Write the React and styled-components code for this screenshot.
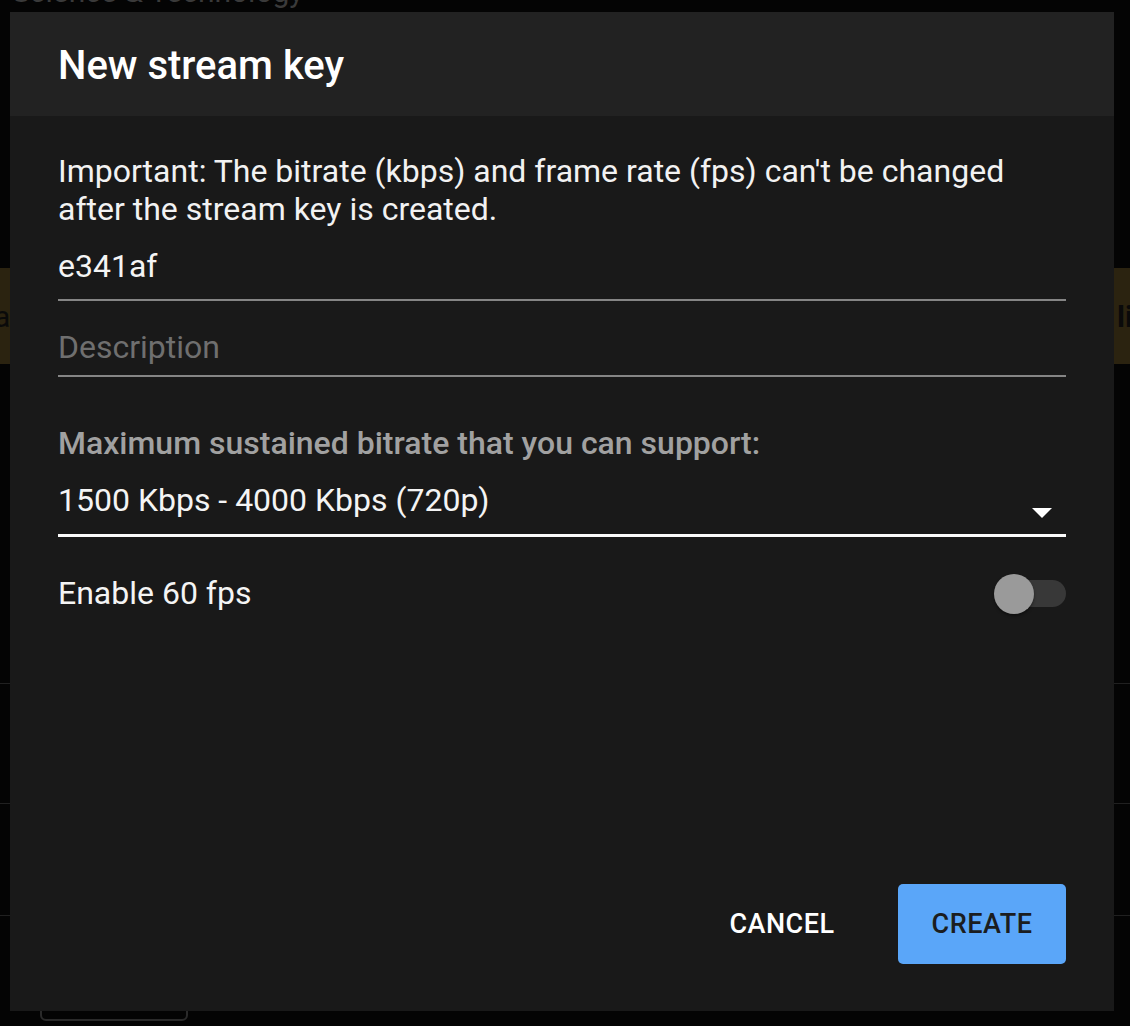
import React, { useState } from 'react'
import styled, { createGlobalStyle } from 'styled-components'

const GlobalStyle = createGlobalStyle`
  html, body {
    margin: 0;
    padding: 0;
    background: #040404;
    font-family: Roboto, "Noto Sans", "Liberation Sans", sans-serif;
    -webkit-font-smoothing: antialiased;
  }
  * { box-sizing: border-box; }
`

/* page behind the modal */
const Page = styled.div`
  position: relative;
  width: 1130px;
  height: 1026px;
  overflow: hidden;
  display: flex;
  flex-direction: column;
`

const PageTitle = styled.h2`
  margin: -25px 0 0 12px;
  font-size: 30px;
  line-height: 34px;
  font-weight: 400;
  color: #3a3a3a;
`

const Banner = styled.div`
  margin-top: 259px;
  height: 96px;
  background: #2b2310;
  display: flex;
  align-items: center;
  justify-content: space-between;
  font-size: 30px;
  color: #0a0a0a;
  overflow: hidden;
`

const BannerEdge = styled.span`
  margin: ${(p) => (p.right ? '0 -3px 0 0' : '0 0 0 -6px')};
  font-weight: ${(p) => (p.right ? 700 : 400)};
`

const ListGap = styled.div`
  height: 319px;
`

const ListRow = styled.div`
  height: ${(p) => p.h}px;
  border-top: 1px solid #202020;
`

const GhostButton = styled.div`
  margin: -8px 0 0 40px;
  width: 148px;
  height: 18px;
  border: 2px solid #2a2a2a;
  border-radius: 6px;
`

/* modal */
const Dialog = styled.div`
  position: fixed;
  left: 10px;
  top: 12px;
  width: 1104px;
  height: 999px;
  background: #191919;
  display: flex;
  flex-direction: column;
  color: #fff;
`

const Header = styled.div`
  height: 104px;
  flex: none;
  background: #222222;
  display: flex;
  align-items: center;
  padding: 2px 48px 0;
`

const Title = styled.h1`
  margin: 0;
  font-size: 40px;
  font-weight: 500;
`

const Body = styled.div`
  flex: 1;
  display: flex;
  flex-direction: column;
  padding: 36px 48px 47px;
`

const Notice = styled.p`
  margin: 0;
  font-size: 32px;
  line-height: 38px;
  color: #f2f2f2;
`

const Field = styled.input`
  display: block;
  width: 100%;
  margin: ${(p) => p.$top}px 0 0;
  padding: 0 0 ${(p) => p.$bottom}px;
  border: none;
  border-bottom: 2px solid #858585;
  background: transparent;
  outline: none;
  font: inherit;
  font-size: 32px;
  line-height: 38px;
  height: ${(p) => 38 + p.$bottom + 2}px;
  color: #f4f4f4;
  &::placeholder { color: #6f6f6f; }
`

const Label = styled.div`
  margin-top: 47px;
  font-size: 32px;
  line-height: 38px;
  font-weight: 500;
  color: #a1a1a1;
`

const Select = styled.div`
  margin-top: 19px;
  display: flex;
  align-items: center;
  justify-content: space-between;
  border-bottom: 3px solid #fafafa;
  padding-bottom: 15px;
  height: 56px;
`

const SelectValue = styled.span`
  font-size: 32px;
  line-height: 38px;
  color: #f4f4f4;
`

const Caret = styled.svg`
  width: 48px;
  height: 48px;
  margin: 12px 0 -12px;
  fill: #fff;
`

const ToggleRow = styled.div`
  margin-top: 37px;
  display: flex;
  align-items: center;
  justify-content: space-between;
  height: 38px;
`

const ToggleLabel = styled.span`
  font-size: 32px;
  line-height: 38px;
  color: #f4f4f4;
`

const Track = styled.button`
  position: relative;
  width: 56px;
  height: 27px;
  padding: 0;
  border: none;
  border-radius: 14px;
  background: ${(p) => (p.$on ? '#3b6fa8' : '#383838')};
  cursor: pointer;
`

const Thumb = styled.span`
  position: absolute;
  top: -6px;
  left: ${(p) => (p.$on ? '30px' : '-16px')};
  width: 40px;
  height: 40px;
  border-radius: 50%;
  background: ${(p) => (p.$on ? '#5aa6f9' : '#9a9a9a')};
  box-shadow: 0 2px 3px rgba(0, 0, 0, 0.4);
`

const Actions = styled.div`
  margin-top: auto;
  display: flex;
  justify-content: flex-end;
  gap: 32px;
`

const Button = styled.button`
  width: 168px;
  height: 80px;
  border: none;
  border-radius: 5px;
  background: ${(p) => (p.$primary ? '#5aa6f9' : 'transparent')};
  color: ${(p) => (p.$primary ? '#1b1d20' : '#fff')};
  font-family: inherit;
  font-size: 27px;
  font-weight: 500;
  letter-spacing: 0.5px;
  text-transform: uppercase;
  cursor: pointer;
`

const App = () => {
  const [key, setKey] = useState('e341af')
  const [desc, setDesc] = useState('')
  const [fps60, setFps60] = useState(false)

  return (
    <>
      <GlobalStyle />
      <Page>
        <PageTitle>Science &amp; Technology</PageTitle>
        <Banner>
          <BannerEdge>a</BannerEdge>
          <BannerEdge right>li</BannerEdge>
        </Banner>
        <ListGap />
        <ListRow h={120} />
        <ListRow h={112} />
        <ListRow h={96} />
        <GhostButton />
      </Page>

      <Dialog role="dialog">
        <Header>
          <Title>New stream key</Title>
        </Header>
        <Body>
          <Notice>
            Important: The bitrate (kbps) and frame rate (fps) can't be changed
            after the stream key is created.
          </Notice>
          <Field $top={19} $bottom={14} value={key} onChange={(e) => setKey(e.target.value)} />
          <Field
            $top={27}
            $bottom={9}
            placeholder="Description"
            value={desc}
            onChange={(e) => setDesc(e.target.value)}
          />
          <Label>Maximum sustained bitrate that you can support:</Label>
          <Select>
            <SelectValue>1500 Kbps - 4000 Kbps (720p)</SelectValue>
            <Caret viewBox="0 0 24 24">
              <path d="M7 10l5 5 5-5z" />
            </Caret>
          </Select>
          <ToggleRow>
            <ToggleLabel>Enable 60 fps</ToggleLabel>
            <Track $on={fps60} onClick={() => setFps60(!fps60)}>
              <Thumb $on={fps60} />
            </Track>
          </ToggleRow>
          <Actions>
            <Button>Cancel</Button>
            <Button $primary>Create</Button>
          </Actions>
        </Body>
      </Dialog>
    </>
  )
}

export default App
